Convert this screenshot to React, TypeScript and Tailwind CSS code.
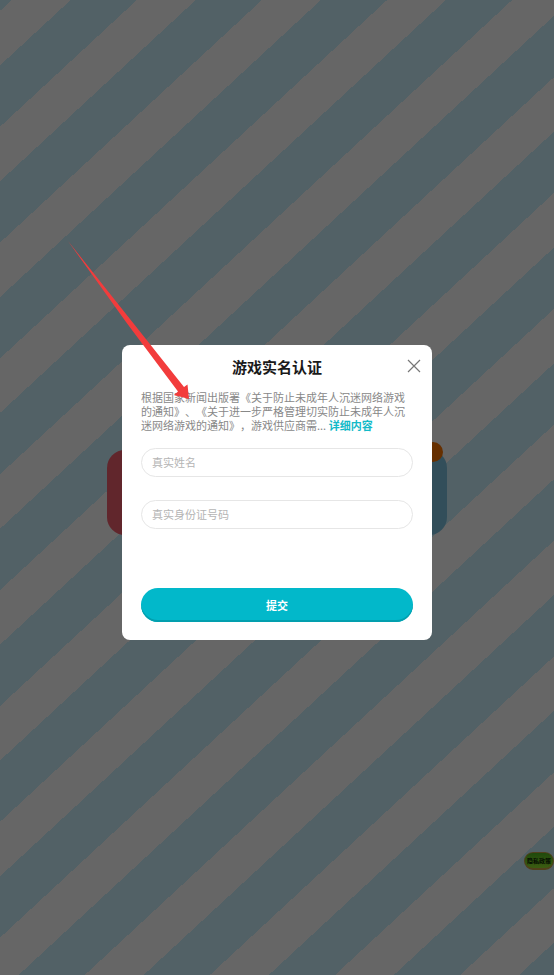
import React from 'react';

interface FieldProps {
  name: string;
  label: string;
}

const Field: React.FC<FieldProps> = ({ name, label }) => (
  <input
    name={name}
    type="text"
    aria-label={label}
    placeholder={label}
    className="block h-[29px] w-full rounded-full border border-[#e6e6e6] bg-white px-[10px] pb-[2px] text-[11px] text-[#333] placeholder:text-[#b5b5b5] outline-none"
  />
);

const GameScene: React.FC = () => (
  <div className="absolute inset-0 flex items-center justify-center pt-[10px] bg-[repeating-linear-gradient(137.2deg,#526166_0px,#526166_8px,#666666_8px,#666666_48px,#526166_48px,#526166_85px)]">
    <div className="relative flex h-[85px] w-[340px] justify-between">
      <div className="w-24 rounded-[18px] bg-[#61262c]" />
      <div className="w-24 rounded-[18px] bg-[#324e5a]" />
      <span className="absolute right-1 -top-2 size-5 rounded-full bg-[#662f00]" />
    </div>
  </div>
);

const PrivacyBadge: React.FC = () => (
  <button
    type="button"
    className="absolute bottom-[105px] right-0 flex h-[18px] w-[30px] items-center justify-center whitespace-nowrap rounded-full border border-b-2 border-[#50401c] bg-linear-to-b from-[#1f4a0c] to-[#3c5c12] text-[6px] font-black leading-none text-[#081202]"
  >
    隐私政策
  </button>
);

const RealNameDialog: React.FC = () => (
  <form
    role="dialog"
    aria-labelledby="dialog-title"
    onSubmit={(e) => e.preventDefault()}
    className="relative w-full max-w-[310px] rounded-lg bg-white px-[19px] pb-[18px] pt-3"
  >
    <h1 id="dialog-title" className="text-center text-[15px] font-bold leading-5 text-[#1a1a1a]">
      游戏实名认证
    </h1>
    <button type="button" aria-label="关闭" className="absolute right-[11px] top-[14px]">
      <svg className="size-[14px]" viewBox="0 0 14 14" fill="none" stroke="#777" strokeWidth="1.2">
        <path d="M1 1l12 12M13 1L1 13" />
      </svg>
    </button>

    <p className="mt-[13px] text-[11px] leading-[14px] text-[#888] [text-spacing-trim:space-all]">
      根据国家新闻出版署《关于防止未成年人沉迷网络游戏的通知》、《关于进一步严格管理切实防止未成年人沉迷网络游戏的通知》，游戏供应商需...{' '}
      <a href="#detail" className="font-bold text-[#12bac8]">详细内容</a>
    </p>

    <div className="mt-4 flex flex-col gap-[23px]">
      <Field name="realName" label="真实姓名" />
      <Field name="idNumber" label="真实身份证号码" />
    </div>

    <button
      type="submit"
      className="mt-[59px] block h-[34px] w-full rounded-full bg-[#02b8ca] text-[11px] font-bold text-white shadow-[inset_0_-2px_0_#029fae]"
    >
      提交
    </button>
  </form>
);

const App: React.FC = () => {
  return (
    <main className="relative flex min-h-screen items-center justify-center overflow-hidden pt-[10px] font-['Noto_Sans_CJK_SC',sans-serif]">
      <GameScene />
      <PrivacyBadge />
      <RealNameDialog />
      <svg className="pointer-events-none absolute left-[68px] top-[241px] h-[160px] w-[122px]" viewBox="0 0 122 160">
        <path d="M0 0L116 146L119.500 143.500L121 158L106 154L110 150.500L58 81Z" fill="#f23c3c" />
      </svg>
    </main>
  );
};

export default App;
